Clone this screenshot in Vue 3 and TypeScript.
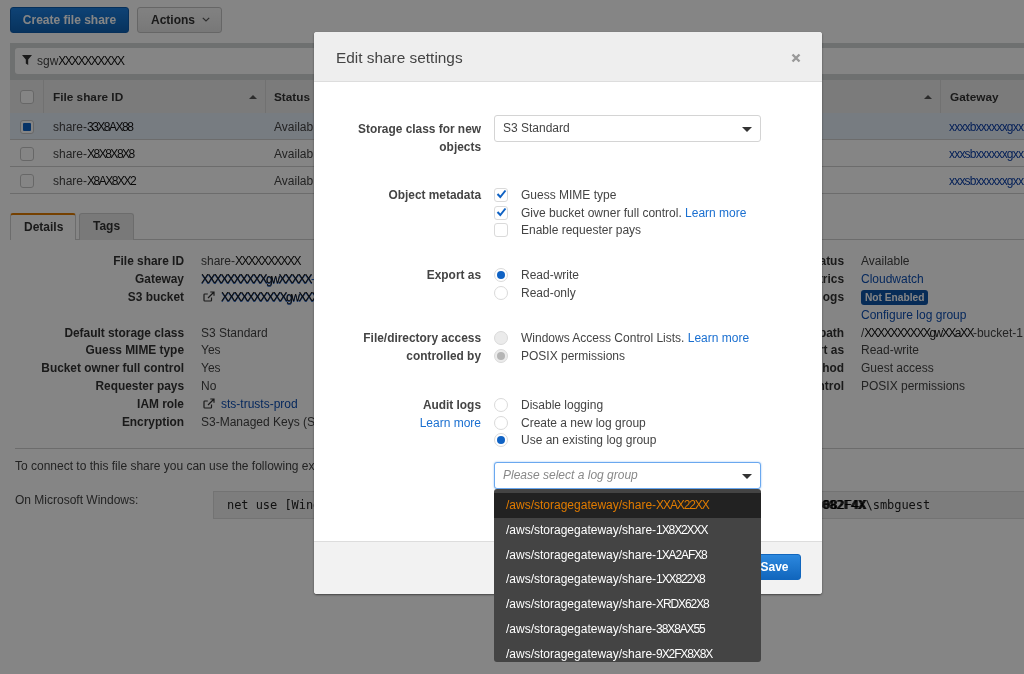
<script setup lang="ts">
interface Row { id: string; selected: boolean; gateway: string }
const rows: Row[] = [
  { id: '33X8AX88', selected: true, gateway: 'xxxxbxxxxxxgxxxx' },
  { id: 'X8X8X8X8', selected: false, gateway: 'xxxsbxxxxxxgxxxx' },
  { id: 'X8AX8XX2', selected: false, gateway: 'xxxsbxxxxxxgxxxx' },
]
const logGroups: string[] = ['XXAX22XX', '1X8X2XXX', '1XA2AFX8', '1XX822X8', 'XRDX62X8', '38X8AX55', '9X2FX8X8X']
</script>

<template>
  <div class="page">
    <div class="toolbar">
      <button class="btn primary">Create file share</button>
      <button class="btn plain">Actions
        <svg width="8" height="5" viewBox="0 0 8 5"><path d="M.8.800L4 4l3.200-3.200" fill="none" stroke="#555" stroke-width="1.200" /></svg>
      </button>
    </div>

    <div class="filter-band">
      <div class="filter-input">
        <svg class="funnel" width="10" height="10" viewBox="0 0 10 10"><path d="M0 0h10L6.200 4.600V10L3.800 8.500V4.600z" fill="#333" /></svg>
        <span>sgw</span><span class="scrib">XXXXXXXXXX</span>
      </div>
    </div>

    <div class="table">
      <div class="thead">
        <div class="c-check"><span class="cb"></span></div>
        <div class="c-id">File share ID<i class="caret"></i></div>
        <div class="c-status">Status<i class="caret"></i></div>
        <div class="c-gw">Gateway</div>
      </div>
      <div v-for="row in rows" :key="row.id" class="tr" :class="{ selected: row.selected }">
        <div class="c-check"><span class="cb" :class="{ on: row.selected }"></span></div>
        <div class="c-id">share-<span class="scrib">{{ row.id }}</span></div>
        <div class="c-status">Available</div>
        <div class="c-gw"><span class="scrib blue">{{ row.gateway }}</span></div>
      </div>
    </div>

    <div class="tabs">
      <span class="tab active">Details</span>
      <span class="tab">Tags</span>
    </div>

    <div class="details">
      <dl class="dl left">
        <dt>File share ID</dt><dd>share-<span class="scrib">XXXXXXXXXX</span></dd>
        <dt>Gateway</dt><dd class="link"><span class="scrib mix">XXXXXXXXXXgwXXXXX</span>-</dd>
        <dt>S3 bucket</dt><dd><svg class="ext" width="12" height="11" viewBox="0 0 12 11"><path d="M8.500 6.500v2.700a.8.800 0 0 1-.8.800H1.800a.8.800 0 0 1-.8-.8V3.800a.8.800 0 0 1 .8-.8h3M5 7l5.500-5.500M7.300 1H11v3.700" fill="none" stroke="#333" stroke-width="1.200" /></svg><span class="scrib mix">XXXXXXXXXXgwXXXXX</span></dd>
        <dt class="blank"></dt><dd class="blank"></dd>
        <dt>Default storage class</dt><dd>S3 Standard</dd>
        <dt>Guess MIME type</dt><dd>Yes</dd>
        <dt>Bucket owner full control</dt><dd>Yes</dd>
        <dt>Requester pays</dt><dd>No</dd>
        <dt>IAM role</dt><dd><svg class="ext" width="12" height="11" viewBox="0 0 12 11"><path d="M8.500 6.500v2.700a.8.800 0 0 1-.8.800H1.800a.8.800 0 0 1-.8-.8V3.800a.8.800 0 0 1 .8-.8h3M5 7l5.500-5.500M7.300 1H11v3.700" fill="none" stroke="#333" stroke-width="1.200" /></svg><span class="link">sts-trusts-prod</span></dd>
        <dt>Encryption</dt><dd>S3-Managed Keys (SSE-S3)</dd>
      </dl>
      <dl class="dl right">
        <dt>Status</dt><dd>Available</dd>
        <dt>Metrics</dt><dd class="link">Cloudwatch</dd>
        <dt>Audit logs</dt><dd><span class="badge">Not Enabled</span></dd>
        <dt></dt><dd class="link">Configure log group</dd>
        <dt>Mount path</dt><dd>/<span class="scrib">XXXXXXXXXXgwXXaXX</span>-bucket-1</dd>
        <dt>Export as</dt><dd>Read-write</dd>
        <dt>Method</dt><dd>Guest access</dd>
        <dt>Control</dt><dd>POSIX permissions</dd>
      </dl>
    </div>

    <div class="connect">
      <p>To connect to this file share you can use the following example commands:</p>
      <div class="cmd">
        <span class="os">On Microsoft Windows:</span>
        <code>net use [WindowsDriveLetter]: \\172.31.25.100\xxxxxxxxxxxxxxx-bucket-1 /user:sgw-<span class="smear">D3082F4X</span>\smbguest</code>
      </div>
    </div>

    <div class="overlay"></div>

    <section class="modal">
      <header class="m-head">
        <h2>Edit share settings</h2>
        <svg width="10" height="10" viewBox="0 0 10 10"><path d="M1.500 1.500l7 7M8.500 1.500l-7 7" stroke="#999" stroke-width="2.400" /></svg>
      </header>

      <div class="m-body">
        <div class="f-row r-storage">
          <label class="f-label">Storage class for new objects</label>
          <div class="select">S3 Standard<i class="sel-caret"></i></div>
        </div>

        <div class="f-row r-meta">
          <label class="f-label">Object metadata</label>
          <div class="opts">
            <div class="opt"><span class="mcb"><svg width="11" height="10" viewBox="0 0 11 10"><path d="M1.500 5l2.800 3L9.500 1.500" fill="none" stroke="#0f62c4" stroke-width="2" /></svg></span>Guess MIME type</div>
            <div class="opt"><span class="mcb"><svg width="11" height="10" viewBox="0 0 11 10"><path d="M1.500 5l2.800 3L9.500 1.500" fill="none" stroke="#0f62c4" stroke-width="2" /></svg></span>Give bucket owner full control.&nbsp;<a>Learn more</a></div>
            <div class="opt"><span class="mcb"></span>Enable requester pays</div>
          </div>
        </div>

        <div class="f-row r-export">
          <label class="f-label">Export as</label>
          <div class="opts">
            <div class="opt"><span class="radio on"></span>Read-write</div>
            <div class="opt"><span class="radio"></span>Read-only</div>
          </div>
        </div>

        <div class="f-row r-access">
          <label class="f-label">File/directory access controlled by</label>
          <div class="opts">
            <div class="opt"><span class="radio dis"></span>Windows Access Control Lists.&nbsp;<a>Learn more</a></div>
            <div class="opt"><span class="radio dis on-dis"></span>POSIX permissions</div>
          </div>
        </div>

        <div class="f-row r-audit">
          <div class="f-label">Audit logs<br /><a>Learn more</a></div>
          <div class="opts">
            <div class="opt"><span class="radio"></span>Disable logging</div>
            <div class="opt"><span class="radio"></span>Create a new log group</div>
            <div class="opt"><span class="radio on"></span>Use an existing log group</div>
          </div>
        </div>

        <div class="f-row r-group">
          <div class="f-label"></div>
          <div class="select focus">
            <em>Please select a log group</em><i class="sel-caret"></i>
            <ul class="menu">
              <li v-for="(g, i) in logGroups" :key="g" :class="{ hi: i === 0 }">/aws/storagegateway/share-<span class="scrib">{{ g }}</span></li>
            </ul>
          </div>
        </div>
      </div>

      <footer class="m-foot">
        <button class="btn cancel">Cancel</button>
        <button class="btn save">Save</button>
      </footer>
    </section>
  </div>
</template>

<style>
html, body { margin: 0; background: #fff; }
</style>

<style scoped>
* { box-sizing: border-box; }
.page {
  position: relative;
  width: 1024px;
  height: 674px;
  overflow: hidden;
  background: #fff;
  font-family: "Liberation Sans", Arial, sans-serif;
  font-size: 12px;
  color: #444;
  filter: blur(0.5px);
}
.scrib { letter-spacing: -1.500px; color: #111; font-size: 12px; }
.scrib.blue { color: #0b3fa8; letter-spacing: -0.800px; white-space: nowrap; }
.scrib.mix { text-shadow: 0 1px 0 #2f66c0; }

.toolbar { display: flex; gap: 8px; padding: 7px 10px 0; height: 43px; }
.btn {
  height: 26px;
  border-radius: 3px;
  font: bold 12px "Liberation Sans", Arial, sans-serif;
  padding: 0;
}
.primary { width: 119px; color: #fff; border: 1px solid #0e5cad; background: linear-gradient(#1c80e0, #0f62b4); }
.plain { width: 85px; color: #333; border: 1px solid #c4c4c4; background: linear-gradient(#f8f8f8, #e6e6e6); text-align: left; padding-left: 13px; }
.plain svg { margin-left: 4px; vertical-align: 2px; }

.filter-band { margin-left: 10px; height: 37px; background: #d4d6d6; padding: 5px 0 6px 5px; }
.filter-input {
  height: 26px;
  background: #fff;
  border-radius: 3px 0 0 3px;
  display: flex;
  align-items: center;
  padding-left: 7px;
}
.funnel { margin-right: 5px; margin-top: -2px; }

.table { margin-left: 10px; }
.thead, .tr { display: flex; align-items: center; }
.thead { height: 33px; background: #ececec; font-weight: bold; font-size: 11.800px; color: #333; }
.thead > div { height: 100%; display: flex; align-items: center; position: relative; }
.thead > div + div { border-left: 1px solid #d8d8d8; }
.thead .c-status { padding-left: 8px; }
.tr { height: 27px; border-bottom: 1px solid #cfcfcf; padding-top: 1px; }
.tr .c-id { padding-left: 10px; }
.tr.selected { background: #e5edf8; }
.c-check { width: 33px; display: flex; justify-content: center; flex: none; }
.c-id { width: 222px; padding-left: 9px; flex: none; }
.c-status { width: 675px; padding-left: 9px; flex: none; }
.c-gw { flex: 1; padding-left: 9px; overflow: hidden; white-space: nowrap; }
.caret {
  position: absolute;
  right: 8px;
  top: 15px;
  border-left: 4px solid transparent;
  border-right: 4px solid transparent;
  border-bottom: 4px solid #555;
}
.cb {
  width: 14px;
  height: 14px;
  border: 1px solid #c6c6c6;
  border-radius: 3px;
  background: #fff;
  display: block;
  position: relative;
}
.cb.on::after {
  content: "";
  position: absolute;
  inset: 2px;
  background: #0f62c4;
  border-radius: 1px;
}

.tabs { display: flex; gap: 3px; margin: 19px 0 0 10px; height: 27px; border-bottom: 1px solid #d0d0d0; }
.tab {
  height: 27px;
  padding: 0 13px 2px;
  display: flex;
  align-items: center;
  font-weight: bold;
  color: #333;
  background: #e8e8e8;
  border: 1px solid #d0d0d0;
  border-bottom: none;
  border-radius: 3px 3px 0 0;
}
.tab.active { width: 66px; background: #fff; border-top: 2px solid #e07b00; }

.details { display: flex; padding-top: 12px; height: 209px; border-bottom: 1px solid #cfcfcf; margin: 0 0 0 15px; }
.dl { margin: 0; display: grid; grid-template-columns: 169px 1fr; column-gap: 17px; grid-auto-rows: 17.900px; align-content: start; white-space: nowrap; }
.dl.left { width: 660px; }
.dl.right { flex: 1; }
dt { text-align: right; font-weight: bold; font-size: 11.900px; color: #333; line-height: 18px; }
dd { margin: 0; line-height: 18px; }
.link { color: #0e4fb3; }
.ext { margin: 0 6px 0 2px; vertical-align: -1px; }
.badge { display: inline-block; background: #0f55a8; color: #fff; font-size: 10.200px; font-weight: bold; border-radius: 3px; padding: 0 4px; line-height: 15px; }

.connect { padding: 10px 0 0 15px; }
.connect p { margin: 0; line-height: 15px; }
.cmd { display: flex; margin-top: 17px; }
.os { width: 198px; line-height: 15px; padding-top: 2px; flex: none; }
code {
  height: 28px;
  width: 811px;
  flex: none;
  padding-left: 13px;
  background: #f0f0f0;
  border: 1px solid #ddd;
  border-right: none;
  font: 12px/27px "DejaVu Sans Mono", monospace;
  letter-spacing: -0.050px;
  color: #222;
  white-space: nowrap;
  overflow: hidden;
}
.smear { color: #000; text-shadow: 1px 0 0 #222, -1px 0 0 #333; }

.overlay { position: absolute; inset: 0; background: rgba(0, 0, 0, 0.48); }

.modal {
  position: absolute;
  left: 314px;
  top: 32px;
  width: 508px;
  height: 562px;
  background: #fff;
  border-radius: 3px;
  box-shadow: 0 1px 2px rgba(0, 0, 0, 0.5);
  display: flex;
  flex-direction: column;
}
.m-head {
  height: 50px;
  flex: none;
  background: #eee;
  border-bottom: 1px solid #ddd;
  border-radius: 3px 3px 0 0;
  display: flex;
  align-items: center;
  justify-content: space-between;
  padding: 2px 21px 0 22px;
}
h2 { margin: 0; font-size: 15.400px; font-weight: normal; color: #444; }
.m-body { flex: 1; padding-top: 33px; }
.f-row { display: flex; gap: 13px; }
.f-label { width: 167px; flex: none; text-align: right; font-weight: bold; font-size: 11.900px; color: #444; line-height: 18px; }
.f-label a { font-weight: normal; font-size: 12px; }
a { color: #1a6fd0; }
.r-storage .f-label { padding-top: 5px; }
.r-meta { margin-top: 30px; }
.r-export { margin-top: 27px; }
.r-access { margin-top: 27px; }
.r-audit { margin-top: 31px; }
.r-group { margin-top: 13px; }
.opts { display: flex; flex-direction: column; }
.opt { display: flex; align-items: center; height: 17.800px; white-space: nowrap; color: #444; }
.mcb, .radio {
  width: 14px;
  height: 14px;
  flex: none;
  margin-right: 13px;
  border: 1px solid #dadada;
  background: #fff;
  display: flex;
  align-items: center;
  justify-content: center;
}
.mcb { border-radius: 3px; }
.mcb svg { margin: -1px 0 0 1px; }
.radio { border-radius: 50%; position: relative; }
.radio.on::after { content: ""; width: 8px; height: 8px; border-radius: 50%; background: #0f62c4; }
.radio.dis { background: #ebebeb; }
.radio.on-dis::after { content: ""; width: 8px; height: 8px; border-radius: 50%; background: #b5b5b5; }

.select {
  position: relative;
  width: 267px;
  height: 27px;
  border: 1px solid #d4d4d4;
  border-radius: 3px;
  background: #fff;
  padding-left: 8px;
  line-height: 25px;
  color: #444;
}
.select em { color: #888; }
.select.focus { border-color: #6aa8ef; box-shadow: 0 0 2px #8cbcf3; }
.sel-caret {
  position: absolute;
  right: 8px;
  top: 11px;
  border-left: 5px solid transparent;
  border-right: 5px solid transparent;
  border-top: 5px solid #333;
}
.menu {
  position: absolute;
  left: -1px;
  top: 26px;
  width: 267px;
  height: 173px;
  overflow: hidden;
  margin: 0;
  padding: 4px 0 0;
  list-style: none;
  background: #444;
  border-radius: 3px;
  z-index: 2;
}
.menu li { height: 24.700px; line-height: 24px; padding-left: 12px; color: #fff; white-space: nowrap; }
.menu li .scrib { color: #fff; letter-spacing: -1.100px; }
.menu li.hi { background: #222; color: #e07b00; }
.menu li.hi .scrib { color: #e07b00; }

.m-foot {
  height: 53px;
  flex: none;
  background: #f2f2f2;
  border-top: 1px solid #ddd;
  border-radius: 0 0 3px 3px;
  display: flex;
  justify-content: flex-end;
  align-items: center;
  gap: 8px;
  padding: 0 21px 2px 0;
}
.cancel { width: 70px; color: #333; border: 1px solid #ccc; background: #f6f6f6; }
.save { width: 52px; color: #fff; border: 1px solid #1166bd; background: linear-gradient(#2c88de, #1166bd); padding-right: 1px; }
</style>
